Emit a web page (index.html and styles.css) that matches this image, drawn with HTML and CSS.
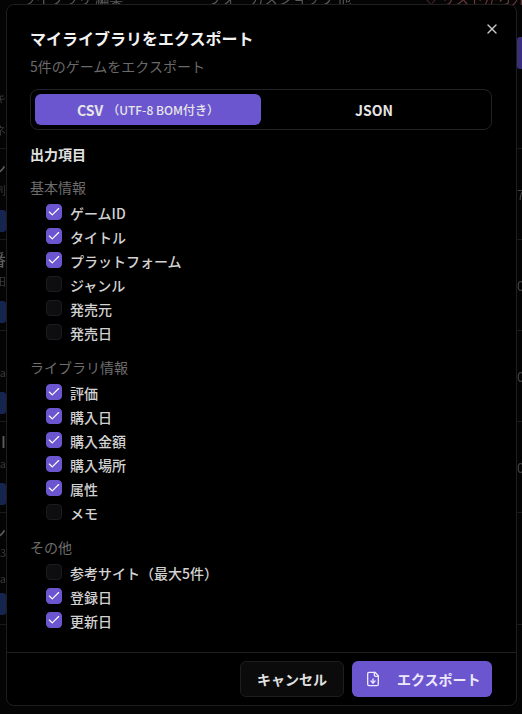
FILE: index.html
```html
<!DOCTYPE html>
<html lang="ja">
<head>
<meta charset="utf-8">
<title>エクスポート</title>
<link rel="stylesheet" href="styles.css">
</head>
<body>
<div class="backdrop">
  <div class="bg-top">
    <span class="bg-top-a">ライブラリ 編集</span>
    <span class="bg-top-b">フォーカスショップ 他</span>
    <span class="bg-top-c">♡ リストから外す</span>
  </div>
  <div class="bg-head">
    <div class="bg-left">
      <span class="bg-l bg-l1">キ</span>
      <span class="bg-l bg-l2">ネ</span>
    </div>
    <div class="bg-right"><span class="bg-purple"></span></div>
  </div>
  <div class="bg-row"><div class="bg-left"><b class="bg-big">ン</b><span>列</span><i class="chip"></i></div><div class="bg-right"><span>7</span></div></div>
  <div class="bg-row"><div class="bg-left"><b class="bg-big">番</b><span>田</span><i class="chip"></i></div><div class="bg-right"><span>0</span></div></div>
  <div class="bg-row"><div class="bg-left"><b class="bg-big"></b><span>a</span><i class="chip"></i></div><div class="bg-right"><span>0</span></div></div>
  <div class="bg-row"><div class="bg-left"><b class="bg-big">I</b><span>a</span><i class="chip"></i></div><div class="bg-right"><span>0</span></div></div>
  <div class="bg-row bg-row-tall"><div class="bg-left bg-left-tall"><b class="bg-big">ン</b><span>3</span><span>a</span><i class="chip"></i></div><div class="bg-right"></div></div>
</div>

<section class="modal">
  <button class="close" aria-label="閉じる">
    <svg viewBox="0 0 24 24" width="16" height="16" fill="none" stroke="currentColor" stroke-width="2" stroke-linecap="round"><path d="M18 6 6 18"/><path d="m6 6 12 12"/></svg>
  </button>
  <div class="body">
    <h1 class="title">マイライブラリをエクスポート</h1>
    <p class="sub">5件のゲームをエクスポート</p>
    <div class="tabs">
      <div class="tab active">CSV<small>（UTF-8 BOM付き）</small></div>
      <div class="tab">JSON</div>
    </div>
    <h2 class="heading">出力項目</h2>

    <h3 class="group">基本情報</h3>
    <ul class="list">
      <li class="item"><span class="box on"><svg viewBox="0 0 24 24" fill="none" stroke="currentColor" stroke-width="2" stroke-linecap="round" stroke-linejoin="round"><path d="M20 6 9 17l-5-5"/></svg></span>ゲームID</li>
      <li class="item"><span class="box on"><svg viewBox="0 0 24 24" fill="none" stroke="currentColor" stroke-width="2" stroke-linecap="round" stroke-linejoin="round"><path d="M20 6 9 17l-5-5"/></svg></span>タイトル</li>
      <li class="item"><span class="box on"><svg viewBox="0 0 24 24" fill="none" stroke="currentColor" stroke-width="2" stroke-linecap="round" stroke-linejoin="round"><path d="M20 6 9 17l-5-5"/></svg></span>プラットフォーム</li>
      <li class="item"><span class="box"></span>ジャンル</li>
      <li class="item"><span class="box"></span>発売元</li>
      <li class="item"><span class="box"></span>発売日</li>
    </ul>

    <h3 class="group">ライブラリ情報</h3>
    <ul class="list">
      <li class="item"><span class="box on"><svg viewBox="0 0 24 24" fill="none" stroke="currentColor" stroke-width="2" stroke-linecap="round" stroke-linejoin="round"><path d="M20 6 9 17l-5-5"/></svg></span>評価</li>
      <li class="item"><span class="box on"><svg viewBox="0 0 24 24" fill="none" stroke="currentColor" stroke-width="2" stroke-linecap="round" stroke-linejoin="round"><path d="M20 6 9 17l-5-5"/></svg></span>購入日</li>
      <li class="item"><span class="box on"><svg viewBox="0 0 24 24" fill="none" stroke="currentColor" stroke-width="2" stroke-linecap="round" stroke-linejoin="round"><path d="M20 6 9 17l-5-5"/></svg></span>購入金額</li>
      <li class="item"><span class="box on"><svg viewBox="0 0 24 24" fill="none" stroke="currentColor" stroke-width="2" stroke-linecap="round" stroke-linejoin="round"><path d="M20 6 9 17l-5-5"/></svg></span>購入場所</li>
      <li class="item"><span class="box on"><svg viewBox="0 0 24 24" fill="none" stroke="currentColor" stroke-width="2" stroke-linecap="round" stroke-linejoin="round"><path d="M20 6 9 17l-5-5"/></svg></span>属性</li>
      <li class="item"><span class="box"></span>メモ</li>
    </ul>

    <h3 class="group">その他</h3>
    <ul class="list">
      <li class="item"><span class="box"></span>参考サイト（最大5件）</li>
      <li class="item"><span class="box on"><svg viewBox="0 0 24 24" fill="none" stroke="currentColor" stroke-width="2" stroke-linecap="round" stroke-linejoin="round"><path d="M20 6 9 17l-5-5"/></svg></span>登録日</li>
      <li class="item"><span class="box on"><svg viewBox="0 0 24 24" fill="none" stroke="currentColor" stroke-width="2" stroke-linecap="round" stroke-linejoin="round"><path d="M20 6 9 17l-5-5"/></svg></span>更新日</li>
    </ul>
  </div>
  <footer class="footer">
    <button class="btn cancel">キャンセル</button>
    <button class="btn export">
      <svg viewBox="0 0 24 24" width="16" height="16" fill="none" stroke="currentColor" stroke-width="2" stroke-linecap="round" stroke-linejoin="round"><path d="M15 2H6a2 2 0 0 0-2 2v16a2 2 0 0 0 2 2h12a2 2 0 0 0 2-2V7Z"/><path d="M14 2v4a2 2 0 0 0 2 2h4"/><path d="M12 18v-6"/><path d="m9 15 3 3 3-3"/></svg>
      エクスポート
    </button>
  </footer>
</section>
</body>
</html>
```

FILE: styles.css
```css
* { box-sizing: border-box; }
html, body { margin: 0; padding: 0; height: 100%; }
body {
  position: relative;
  width: 522px;
  height: 714px;
  overflow: hidden;
  background: #040405;
  font-family: "Noto Sans CJK JP", "Noto Sans", sans-serif;
  color: #d6d6d6;
}

/* dimmed page behind the dialog */
.backdrop {
  height: 714px;
  overflow: hidden;
  filter: blur(0.6px);
  color: #4a4a4a;
  font-size: 13px;
}
.bg-top {
  height: 5px;
  position: relative;
  overflow: hidden;
  font-size: 14px;
  line-height: 14px;
  color: #5a5a5a;
}
.bg-top span { position: absolute; top: -9px; white-space: nowrap; }
.bg-top-a { left: 22px; }
.bg-top-b { left: 208px; }
.bg-top-c { left: 424px; color: #6e3a3a; }
.bg-head {
  display: flex;
  justify-content: space-between;
  height: 144px;
  border-bottom: 1px solid #1a1a1c;
}
.bg-row {
  display: flex;
  justify-content: space-between;
  height: 91px;
  border-bottom: 1px solid #1a1a1c;
}
.bg-row-tall { height: 112px; }
.bg-left {
  width: 6px;
  display: flex;
  flex-direction: column;
  align-items: flex-end;
  overflow: hidden;
}
.bg-left span, .bg-left b { white-space: nowrap; flex: none; }
.bg-head .bg-left { padding-top: 82px; gap: 14px; }
.bg-l { font-size: 14px; line-height: 14px; color: #444; }
.bg-big {
  height: 22px;
  margin-top: 8px;
  font-size: 16px;
  line-height: 22px;
  font-weight: 500;
  color: #5c5c5c;
}
.bg-left span { font-size: 11px; line-height: 14px; color: #393939; margin-top: 4px; }
.chip {
  flex: none;
  display: block;
  width: 6px;
  height: 22px;
  margin-top: 13px;
  background: #15254f;
  border-radius: 0 3px 3px 0;
}
.bg-left-tall .chip { margin-top: 8px; }
.bg-left-tall span { margin-top: 2px; }
.bg-left-tall span + span { margin-top: 12px; }
.bg-right {
  width: 5px;
  padding-top: 38px;
  font-size: 13px;
  line-height: 16px;
  color: #444;
  overflow: hidden;
}
.bg-head .bg-right { padding-top: 32px; }
.bg-purple {
  display: block;
  width: 5px;
  height: 32px;
  background: #3a2f7a;
  border-radius: 3px 0 0 3px;
}

/* dialog */
.modal {
  position: absolute;
  left: 6px;
  top: 4px;
  width: 511px;
  height: 702px;
  display: flex;
  flex-direction: column;
  background: #000;
  border: 1px solid #1e1e20;
  border-radius: 8px;
}
.close {
  position: absolute;
  right: 16px;
  top: 16px;
  width: 16px;
  height: 16px;
  padding: 0;
  border: 0;
  background: none;
  color: #c8c8c8;
  display: flex;
}
.body {
  flex: 1;
  min-height: 0;
  padding: 21px 24px 0 23px;
}
.title {
  margin: 0;
  font-size: 16px;
  line-height: 24px;
  font-weight: 700;
  color: #f2f2f2;
}
.sub {
  margin: 6px 0 0;
  font-size: 14px;
  line-height: 20px;
  color: #6a6a6a;
}
.tabs {
  display: flex;
  margin-top: 13px;
  height: 41px;
  padding: 4px;
  border: 1px solid #232325;
  border-radius: 8px;
}
.tab {
  flex: 1;
  display: flex;
  align-items: center;
  justify-content: center;
  border-radius: 6px;
  font-size: 14px;
  font-weight: 700;
  color: #e6e6e6;
}
.tab small { font-size: 12px; font-weight: 500; margin-left: 4px; }
.active { background: #6c56d0; }
.heading {
  margin: 13px 0 0;
  font-size: 14px;
  line-height: 22px;
  font-weight: 700;
  color: #e2e2e2;
}
.group {
  margin: 0;
  padding-top: 11px;
  font-size: 14px;
  line-height: 22px;
  font-weight: 400;
  color: #6e6e6e;
}
.list {
  list-style: none;
  margin: 0;
  padding: 3px 0 0 16px;
}
.item {
  display: flex;
  align-items: center;
  gap: 8px;
  height: 24px;
  font-size: 14px;
  font-weight: 500;
  color: #d2d2d2;
}
.box {
  flex: none;
  width: 16px;
  height: 16px;
  margin-top: -2px;
  border: 1px solid #1b1b1d;
  border-radius: 4px;
  background: #0e0e10;
  display: flex;
  align-items: center;
  justify-content: center;
  color: #fff;
}
.box svg { width: 14px; height: 14px; }
.on { background: #6c56d0; border-color: #6c56d0; }
.footer {
  flex: none;
  height: 53px;
  display: flex;
  justify-content: flex-end;
  gap: 8px;
  padding: 8px 24px 0 0;
  border-top: 1px solid #1e1e20;
}
.btn {
  display: flex;
  align-items: center;
  height: 36px;
  border-radius: 6px;
  font-family: inherit;
  font-size: 14px;
  font-weight: 700;
}
.cancel {
  width: 104px;
  justify-content: center;
  padding: 0;
  background: #0b0b0c;
  border: 1px solid #1e1e20;
  color: #e0e0e0;
}
.export {
  width: 140px;
  gap: 16px;
  padding: 0 0 0 13px;
  border: 0;
  background: #6c56d0;
  color: #ece9fb;
}
```
